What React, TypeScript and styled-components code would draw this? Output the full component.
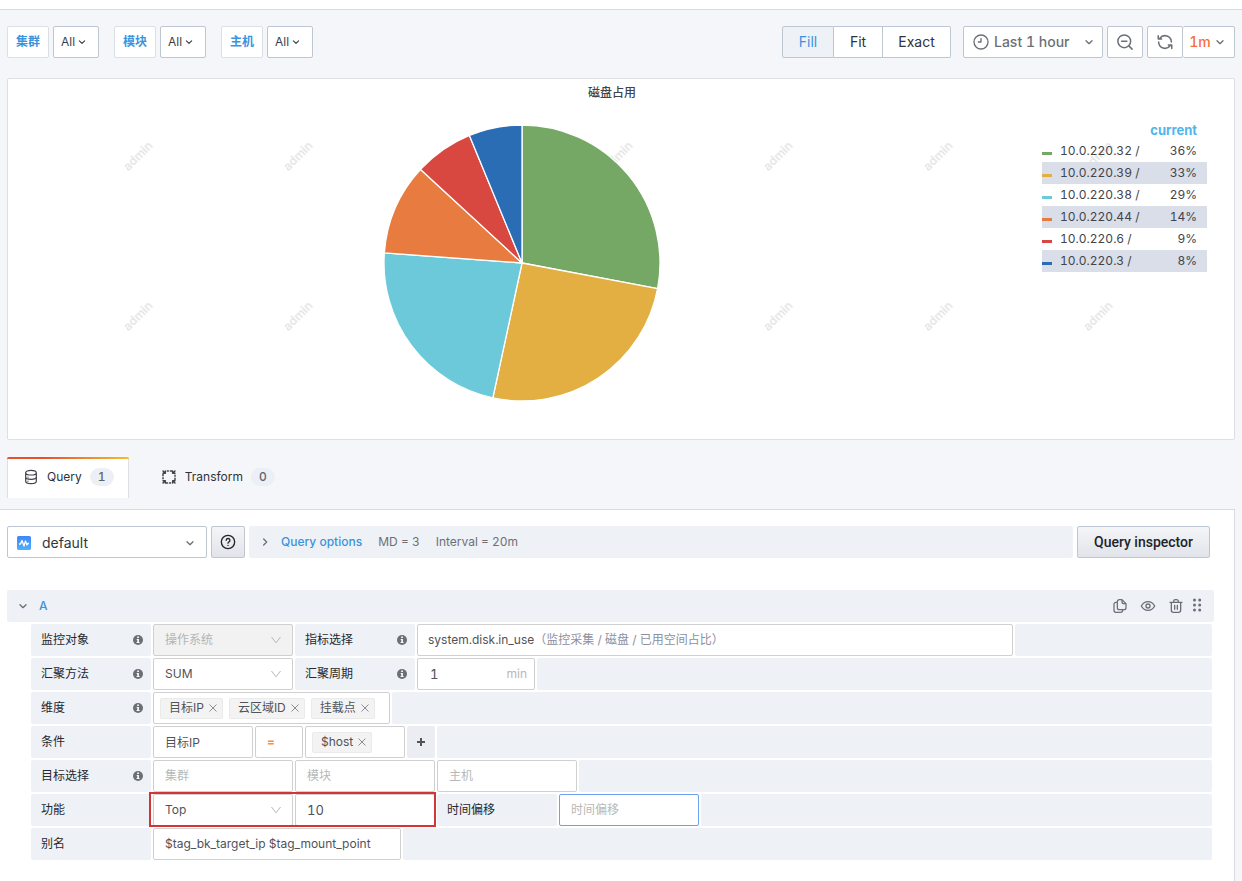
import React from "react";
import styled, { createGlobalStyle, css } from "styled-components";

const GlobalStyle = createGlobalStyle`
  *, *::before, *::after { box-sizing: border-box; }
  html, body, #root { height: 100%; }
  body {
    margin: 0;
    background: #f5f6f9;
    color: #41444b;
    font-family: Inter, "Noto Sans CJK SC", sans-serif;
    font-size: 12px;
    line-height: 16px;
    font-variant-numeric: tabular-nums;
  }
  button, input, select { font: inherit; color: inherit; margin: 0; }
  button { cursor: pointer; padding: 0; }
`;

const Page = styled.div`
  min-height: 100%;
  display: flex;
  flex-direction: column;
`;

const TopBar = styled.header`
  height: 10px;
  background: #fff;
  border-bottom: 1px solid #d8dce2;
`;

const Toolbar = styled.div`
  display: flex;
  justify-content: space-between;
  padding: 16px 7px 0;
  height: 68px;
`;

const Variables = styled.div`
  display: flex;
  gap: 15px;
`;

const Variable = styled.div`
  display: flex;
  gap: 4px;
`;

const VariableLabel = styled.label`
  height: 32px;
  width: 42px;
  display: flex;
  align-items: center;
  justify-content: center;
  background: #fff;
  border: 1px solid #dbe0e6;
  border-radius: 2px;
  color: #3a94dd;
  font-weight: 600;
`;

const Control = styled.button<{ $width: number }>`
  height: 32px;
  width: ${(p) => p.$width}px;
  display: flex;
  align-items: center;
  justify-content: center;
  background: #fff;
  border: 1px solid #bdc7d1;
  border-radius: 2px;
`;

const VariableValue = styled(Control)`
  gap: 0;
  padding-right: 2px;
  color: #3b3e45;
`;

const Actions = styled.div`
  display: flex;
  gap: 4px;
  font-size: 14px;
`;

const Segments = styled.div`
  display: flex;
  margin-right: 8px;
`;

const Segment = styled(Control)<{ $active?: boolean }>`
  color: #30343b;
  border-radius: 0;
  & + & { border-left: 0; }
  &:first-child { border-radius: 2px 0 0 2px; }
  &:last-child { border-radius: 0 2px 2px 0; }
  ${(p) => p.$active && css`background: #eef1f6; color: #3a94dd;`}
`;

const TimePicker = styled(Control)`
  justify-content: flex-start;
  padding: 0 5px 0 9px;
  gap: 5px;
  font-weight: 500;
  color: #6c7076;
  span { flex: 1; text-align: left; }
`;

const IconButton = styled(Control)`
  color: #6c7076;
`;

const RefreshGroup = styled.div`
  display: flex;
`;

const RefreshInterval = styled(Control)`
  border-left: 0;
  gap: 1px;
  color: #f96b3c;
  font-weight: 500;
  svg { color: #6c7076; }
`;

const Panel = styled.section`
  position: relative;
  height: 362px;
  margin: 0 7px;
  background: #fff;
  border: 1px solid #dbe0e6;
  border-radius: 2px;
`;

const PanelTitle = styled.h2`
  position: relative;
  margin: 0;
  padding-right: 18px;
  height: 28px;
  line-height: 28px;
  text-align: center;
  font-size: 12px;
  font-weight: 500;
`;

const PanelBody = styled.div`
  position: relative;
  display: flex;
  justify-content: space-between;
`;

const ChartArea = styled.div`
  flex: 1;
  display: flex;
  justify-content: center;
  padding: 17px 6px 0 0;
`;

const Watermark = styled.div`
  position: absolute;
  inset: 0;
  overflow: hidden;
  display: grid;
  grid-template-columns: repeat(7, 160px);
  grid-template-rows: 160px 160px;
  padding: 0 0 0 50px;
  color: #e6e6e6;
  font-size: 12px;
  font-weight: 600;
  span {
    display: flex;
    align-items: center;
    justify-content: center;
    transform: translateY(-3px) rotate(-45deg);
  }
`;

const Legend = styled.table`
  width: 165px;
  margin: 12px 27px 0 0;
  border-collapse: collapse;
  align-self: flex-start;
  th { height: 21px; padding: 0 10px 0 0; text-align: right; color: #52b5ec; font-size: 13px; font-weight: 700; }
  td { height: 22px; padding: 0; }
  td:last-child { text-align: right; padding-right: 10px; }
  tbody tr:nth-child(even) { background: #d9dee9; }
`;

const Series = styled.span<{ $color: string }>`
  display: flex;
  align-items: center;
  gap: 8px;
  &::before {
    content: "";
    width: 10px;
    height: 3px;
    margin-top: 5px;
    background: ${(p) => p.$color};
  }
`;

const Tabs = styled.nav`
  display: flex;
  gap: 16px;
  padding: 17px 7px 0;
  height: 69px;
`;

const Tab = styled.button<{ $active?: boolean }>`
  position: relative;
  height: 41px;
  display: flex;
  align-items: center;
  gap: 8px;
  padding: 0 16px 2px;
  border: 0;
  background: none;
  color: #2f333a;
  svg { color: #3f434a; }
  ${(p) => p.$active && css`
    background: #fff;
    border: solid #dbe0e6;
    border-width: 0 1px;
    border-radius: 2px 2px 0 0;
    padding: 0 14px 2px 15px;
    &::before {
      content: "";
      position: absolute;
      top: 0;
      left: -1px;
      right: -1px;
      height: 2px;
      border-radius: 2px 2px 0 0;
      background: linear-gradient(90deg, #e8502d 0%, #e8502d 30%, #f5bd2c 100%);
    }
  `}
`;

const Counter = styled.span`
  min-width: 24px;
  height: 18px;
  line-height: 18px;
  border-radius: 9px;
  background: #eceff5;
  color: #60646b;
  font-weight: 500;
`;

const Editor = styled.main`
  flex: 1;
  margin-right: 7px;
  padding: 16px 20px 20px 7px;
  background: #fff;
  border: 1px solid #d8dce2;
  border-width: 1px 1px 0 0;
`;

const SourceRow = styled.div`
  display: flex;
  gap: 4px;
  padding-right: 4px;
`;

const SourcePicker = styled(Control)`
  justify-content: flex-start;
  gap: 10px;
  padding: 2px 8px 0 8px;
  font-size: 14px;
  color: #33373e;
  span { flex: 1; text-align: left; }
  svg:last-child { color: #6c7076; }
`;

const RaisedButton = styled(Control)`
  background: linear-gradient(180deg, #f4f5f8 0%, #e1e4ea 100%);
  color: #212429;
  font-family: Roboto, sans-serif;
  font-size: 14px;
  font-weight: 500;
`;

const QueryOptions = styled.div`
  flex: 1;
  height: 32px;
  display: flex;
  align-items: center;
  gap: 16px;
  padding: 0 8px;
  background: #eef1f6;
  border-radius: 2px;
  color: #6c7076;
`;

const OptionsToggle = styled.button`
  display: flex;
  align-items: center;
  gap: 8px;
  border: 0;
  background: none;
  color: #3a94dd;
  font-weight: 500;
  svg { color: #6c7076; }
`;

const QueryHeader = styled.div`
  display: flex;
  align-items: center;
  gap: 8px;
  height: 32px;
  margin-top: 32px;
  padding: 0 12px 0 8px;
  background: #eef1f6;
  border-radius: 2px;
  color: #6c7076;
`;

const HeaderActions = styled.div`
  flex: 1;
  display: flex;
  justify-content: flex-end;
  gap: 12px;
`;

const PlainIcon = styled.button`
  display: flex;
  border: 0;
  background: none;
`;

const Rows = styled.div`
  display: flex;
  flex-direction: column;
  gap: 2px;
  margin: 2px 2px 0 24px;
`;

const Row = styled.div`
  position: relative;
  display: flex;
  gap: 2px;
  height: 32px;
`;

const Label = styled.label`
  flex: none;
  width: 120px;
  display: flex;
  align-items: center;
  justify-content: space-between;
  padding: 0 8px 0 10px;
  background: #eef1f6;
  border-radius: 2px;
  color: #26292f;
  svg { color: #6c7076; }
`;

const Filler = styled.div`
  flex: 1;
  background: #eef1f6;
  border-radius: 2px;
`;

const boxed = css`
  flex: none;
  height: 32px;
  background: #fff;
  border: 1px solid #d0d0d0;
  border-radius: 2px;
  color: #50535a;
`;

const SelectBox = styled.div<{ $disabled?: boolean }>`
  position: relative;
  flex: none;
  width: 140px;
  select {
    ${boxed}
    width: 100%;
    padding: 0 11px;
    appearance: none;
    opacity: 1;
    outline: none;
    ${(p) => p.$disabled && css`background: #f2f2f2; color: #b4b4b4;`}
  }
  svg {
    position: absolute;
    right: 11px;
    top: 10px;
    color: #b8b8b8;
    pointer-events: none;
  }
`;

const TextBox = styled.input<{ $width: number; $accent?: boolean; $large?: boolean }>`
  ${boxed}
  width: ${(p) => p.$width}px;
  padding: 0 11px 2px;
  outline: none;
  &::placeholder { color: #b8b8b8; opacity: 1; }
  ${(p) => p.$large && css`font-size: 13px; padding-bottom: 0;`}
  ${(p) => p.$accent && css`border-color: #6ba1f0;`}
`;

const OperatorBox = styled.button`
  ${boxed}
  width: 48px;
  text-align: left;
  padding: 0 11px;
  color: #ff9230;
  font-weight: 700;
`;

const ChipBox = styled.div<{ $width: number }>`
  ${boxed}
  width: ${(p) => p.$width}px;
  display: flex;
  align-items: center;
  gap: 6px;
  padding: 0 6px;
`;

const Chip = styled.span`
  height: 21px;
  display: flex;
  align-items: center;
  gap: 4px;
  padding: 0 4px 0 8px;
  background: #f3f3f3;
  border: 1px solid #eaeaea;
  border-radius: 2px;
  svg { color: #8a8d92; }
`;

const MetricButton = styled.button`
  ${boxed}
  flex: 0 1 596px;
  display: flex;
  align-items: center;
  padding: 0 10px;
  small { font-size: 12px; color: #8d8f9e; }
`;

const PeriodBox = styled.div`
  ${boxed}
  width: 118px;
  display: flex;
  align-items: center;
  padding: 0 7px 0 12px;
  input { flex: 1; min-width: 0; border: 0; padding: 0; outline: none; background: none; font-size: 13px; }
  span { color: #b8b8b8; }
`;

const AddButton = styled.button`
  width: 28px;
  display: flex;
  align-items: center;
  justify-content: center;
  border: 0;
  border-radius: 2px;
  background: #ebedf2;
  color: #505359;
`;

const Highlight = styled.div`
  position: absolute;
  left: 118px;
  top: -2px;
  width: 287px;
  height: 35px;
  border: 2px solid #d33535;
  pointer-events: none;
`;

type IconProps = { size?: number; children: React.ReactNode; stroke?: number };

function Icon({ size = 16, stroke = 2, children }: IconProps) {
  return (
    <svg width={size} height={size} viewBox="0 0 24 24" fill="none" stroke="currentColor" strokeWidth={stroke} strokeLinecap="round" strokeLinejoin="round" aria-hidden="true">
      {children}
    </svg>
  );
}

const AngleDown = ({ size = 16 }: { size?: number }) => <Icon size={size}><path d="M7.5 10l4.5 4.5 4.5-4.5" /></Icon>;
const AngleRight = () => <Icon><path d="M10 7.500l4.500 4.500-4.500 4.500" /></Icon>;

const Clock = () => (
  <Icon>
    <circle cx="12" cy="12" r="10.500" />
    <path d="M12 6.500v5.500H8" />
  </Icon>
);

const SearchMinus = () => (
  <Icon size={18}>
    <circle cx="11" cy="11" r="8.500" />
    <path d="M7.500 11h7M17.500 17.500l4 4" />
  </Icon>
);

const Sync = () => (
  <Icon size={18}>
    <path d="M20.500 12A8.500 8.500 0 0 0 5.200 7M3 3.500V8h4.500M3.500 12a8.500 8.500 0 0 0 15.300 5M21 20.500V16h-4.500" />
  </Icon>
);

const Database = () => (
  <Icon size={16} stroke={1.800}>
    <path d="M4 5.500C4 3.500 7.500 2 12 2s8 1.500 8 3.500v13c0 2-3.500 3.500-8 3.500s-8-1.500-8-3.500zM4 5.500C4 7.500 7.500 9 12 9s8-1.500 8-3.500M4 12C4 14 7.500 15.500 12 15.500s8-1.500 8-3.500M7.500 12.300v.1M7.500 18.300v.1" />
  </Icon>
);

const TransformIcon = () => (
  <Icon size={16} stroke={2.2}>
    <path d="M3 10V8M3 3l3.500 3.500M6.500 3v3.500H3M9.500 3H11M14 3h2M21 3l-3.500 3.500M17.500 3v3.500H21M21 9.500V11M21 14v2M21 21l-3.500-3.500M21 17.500h-3.500V21M14.500 21H13M10 21H8M3 21l3.500-3.500M6.500 21v-3.500H3M3 14.500V13" />
  </Icon>
);

const Question = () => (
  <Icon size={16}>
    <circle cx="12" cy="12" r="10" />
    <path d="M9.300 9.500a2.800 2.800 0 1 1 3.800 2.700c-.8.300-1.100.800-1.100 1.500M12 17v.1" />
  </Icon>
);

const Copy = () => (
  <Icon size={16} stroke={1.900}>
    <path d="M15 2.500h-4a3 3 0 0 0-3 3v9a3 3 0 0 0 3 3h7a3 3 0 0 0 3-3v-6zM15 2.500v3a3 3 0 0 0 3 3h3M8 6.500H6a3 3 0 0 0-3 3v9a3 3 0 0 0 3 3h7a3 3 0 0 0 3-3v-1" />
  </Icon>
);

const Eye = () => (
  <Icon size={16}>
    <path d="M2 12c2.300-4.300 5.800-6.500 10-6.500s7.700 2.200 10 6.500c-2.300 4.300-5.800 6.500-10 6.500S4.300 16.300 2 12z" />
    <circle cx="12" cy="12" r="3" />
  </Icon>
);

const Trash = () => (
  <Icon size={16}>
    <path d="M3 6.500h18M5 6.500v12a3 3 0 0 0 3 3h8a3 3 0 0 0 3-3v-12M8.500 6.500V5a2.500 2.500 0 0 1 2.500-2.500h2A2.500 2.500 0 0 1 15.500 5v1.500M10 11v6M14 11v6" />
  </Icon>
);

const Drag = () => (
  <svg width="10" height="16" viewBox="0 0 10 16" fill="currentColor" aria-hidden="true">
    {[2, 7, 12].map((y) => (
      <React.Fragment key={y}>
        <circle cx="2.500" cy={y} r="1.500" />
        <circle cx="7.700" cy={y} r="1.500" />
      </React.Fragment>
    ))}
  </svg>
);

const Info = () => (
  <svg width="10" height="10" viewBox="0 0 10 10" aria-hidden="true">
    <circle cx="5" cy="5" r="5" fill="currentColor" />
    <path d="M4.200 1.500h1.700v1.400H4.200zM3.700 3.900h2.200v3.200h.7v1H3.600v-1h.7V4.900h-.6z" fill="#fff" />
  </svg>
);

const Chevron = () => (
  <svg width="12" height="12" viewBox="0 0 12 12" fill="none" stroke="currentColor" aria-hidden="true">
    <path d="M1.500 3L6 8.800 10.500 3" />
  </svg>
);

const Cross = () => (
  <svg width="10" height="10" viewBox="0 0 10 10" fill="none" stroke="currentColor" aria-hidden="true">
    <path d="M1.500 1.500l7 7M8.500 1.500l-7 7" />
  </svg>
);

const Plus = () => (
  <svg width="10" height="10" viewBox="0 0 10 10" fill="none" stroke="currentColor" strokeWidth="2" aria-hidden="true">
    <path d="M1 5h8M5 1v8" />
  </svg>
);

const SourceLogo = () => (
  <svg width="16" height="16" viewBox="0 0 16 16" aria-hidden="true">
    <defs>
      <linearGradient id="logo" x1="0" y1="0" x2="0" y2="1">
        <stop offset="0" stopColor="#3f86f6" />
        <stop offset="1" stopColor="#4fb0fb" />
      </linearGradient>
    </defs>
    <rect x="1" y="1" width="14" height="14" rx="1.500" fill="url(#logo)" />
    <path d="M3 9h1.500L6 5.500 8 11l1.500-5L11 10l.8-1.500H13" fill="none" stroke="#fff" strokeWidth="1.300" strokeLinejoin="round" />
  </svg>
);

const SERIES = [
  { name: "10.0.220.32 /", value: "36%", color: "#75a865", to: 100.700 },
  { name: "10.0.220.39 /", value: "33%", color: "#e3af42", to: 192.200 },
  { name: "10.0.220.38 /", value: "29%", color: "#6bc9da", to: 274.200 },
  { name: "10.0.220.44 /", value: "14%", color: "#e87b40", to: 312.700 },
  { name: "10.0.220.6 /", value: "9%", color: "#d94840", to: 337.600 },
  { name: "10.0.220.3 /", value: "8%", color: "#2a6db5", to: 360 },
];

function Pie() {
  const c = 139;
  const r = 138;
  const at = (deg: number) => {
    const a = ((deg - 90) * Math.PI) / 180;
    return `${c + r * Math.cos(a)} ${c + r * Math.sin(a)}`;
  };
  return (
    <svg width="278" height="278" viewBox="0 0 278 278" role="img" aria-label="磁盘占用">
      {SERIES.map((s, i) => (
        <path
          key={s.name}
          d={`M${c} ${c}L${at(i ? SERIES[i - 1].to : 0)}A${r} ${r} 0 0 1 ${at(s.to)}Z`}
          fill={s.color}
          stroke="#fff"
          strokeWidth="1.300"
          strokeLinejoin="round"
        />
      ))}
    </svg>
  );
}

function Toggle({ id, name }: { id: string; name: string }) {
  return (
    <Variable>
      <VariableLabel htmlFor={id}>{name}</VariableLabel>
      <VariableValue id={id} $width={46}>All<AngleDown size={14} /></VariableValue>
    </Variable>
  );
}

function FieldLabel({ htmlFor, info, children }: { htmlFor: string; info?: boolean; children: string }) {
  return <Label htmlFor={htmlFor}>{children}{info && <Info />}</Label>;
}

function Dropdown({ id, value, disabled }: { id: string; value: string; disabled?: boolean }) {
  return (
    <SelectBox $disabled={disabled}>
      <select id={id} disabled={disabled} defaultValue={value}><option>{value}</option></select>
      <Chevron />
    </SelectBox>
  );
}

function Chips({ id, items, width }: { id: string; items: string[]; width: number }) {
  return (
    <ChipBox id={id} $width={width}>
      {items.map((item) => (
        <Chip key={item}>{item}<PlainIcon aria-label={`移除 ${item}`}><Cross /></PlainIcon></Chip>
      ))}
    </ChipBox>
  );
}

export default function App() {
  return (
    <Page>
      <GlobalStyle />
      <TopBar />
      <Toolbar>
        <Variables>
          <Toggle id="cluster" name="集群" />
          <Toggle id="module" name="模块" />
          <Toggle id="host" name="主机" />
        </Variables>
        <Actions>
          <Segments>
            <Segment $width={52} $active>Fill</Segment>
            <Segment $width={49}>Fit</Segment>
            <Segment $width={68}>Exact</Segment>
          </Segments>
          <TimePicker $width={140}><Clock /><span>Last 1 hour</span><AngleDown /></TimePicker>
          <IconButton $width={36} aria-label="Zoom out"><SearchMinus /></IconButton>
          <RefreshGroup>
            <IconButton $width={36} aria-label="Refresh"><Sync /></IconButton>
            <RefreshInterval $width={52}>1m<AngleDown /></RefreshInterval>
          </RefreshGroup>
        </Actions>
      </Toolbar>

      <Panel>
        <Watermark aria-hidden="true">
          {Array.from({ length: 14 }, (_, i) => <span key={i}>admin</span>)}
        </Watermark>
        <PanelTitle>磁盘占用</PanelTitle>
        <PanelBody>
          <ChartArea><Pie /></ChartArea>
          <Legend>
            <thead><tr><th colSpan={2}>current</th></tr></thead>
            <tbody>
              {SERIES.map((s) => (
                <tr key={s.name}>
                  <td><Series $color={s.color}>{s.name}</Series></td>
                  <td>{s.value}</td>
                </tr>
              ))}
            </tbody>
          </Legend>
        </PanelBody>
      </Panel>

      <Tabs>
        <Tab $active><Database />Query<Counter>1</Counter></Tab>
        <Tab><TransformIcon />Transform<Counter>0</Counter></Tab>
      </Tabs>

      <Editor>
        <SourceRow>
          <SourcePicker $width={200}><SourceLogo /><span>default</span><AngleDown /></SourcePicker>
          <RaisedButton $width={34} aria-label="Help"><Question /></RaisedButton>
          <QueryOptions>
            <OptionsToggle><AngleRight />Query options</OptionsToggle>
            <span>MD = 3</span>
            <span>Interval = 20m</span>
          </QueryOptions>
          <RaisedButton $width={133}>Query inspector</RaisedButton>
        </SourceRow>

        <QueryHeader>
          <OptionsToggle><AngleDown />A</OptionsToggle>
          <HeaderActions>
            <PlainIcon aria-label="Duplicate"><Copy /></PlainIcon>
            <PlainIcon aria-label="Toggle"><Eye /></PlainIcon>
            <PlainIcon aria-label="Remove"><Trash /></PlainIcon>
          </HeaderActions>
          <PlainIcon aria-label="Drag"><Drag /></PlainIcon>
        </QueryHeader>

        <Rows>
          <Row>
            <FieldLabel htmlFor="target" info>监控对象</FieldLabel>
            <Dropdown id="target" value="操作系统" disabled />
            <FieldLabel htmlFor="metric" info>指标选择</FieldLabel>
            <MetricButton id="metric">system.disk.in_use<small>（监控采集 / 磁盘 / 已用空间占比）</small></MetricButton>
            <Filler />
          </Row>
          <Row>
            <FieldLabel htmlFor="method" info>汇聚方法</FieldLabel>
            <Dropdown id="method" value="SUM" />
            <FieldLabel htmlFor="period" info>汇聚周期</FieldLabel>
            <PeriodBox><input id="period" defaultValue="1" /><span>min</span></PeriodBox>
            <Filler />
          </Row>
          <Row>
            <FieldLabel htmlFor="dimension" info>维度</FieldLabel>
            <Chips id="dimension" width={237} items={["目标IP", "云区域ID", "挂载点"]} />
            <Filler />
          </Row>
          <Row>
            <FieldLabel htmlFor="condition">条件</FieldLabel>
            <TextBox id="condition" $width={100} defaultValue="目标IP" />
            <OperatorBox>=</OperatorBox>
            <Chips id="condition-value" width={100} items={["$host"]} />
            <AddButton aria-label="添加条件"><Plus /></AddButton>
            <Filler />
          </Row>
          <Row>
            <FieldLabel htmlFor="pick-cluster" info>目标选择</FieldLabel>
            <TextBox id="pick-cluster" $width={140} placeholder="集群" />
            <TextBox aria-label="模块" $width={140} placeholder="模块" />
            <TextBox aria-label="主机" $width={140} placeholder="主机" />
            <Filler />
          </Row>
          <Row>
            <FieldLabel htmlFor="func">功能</FieldLabel>
            <Dropdown id="func" value="Top" />
            <TextBox aria-label="Top" $width={140} $large defaultValue="10" />
            <FieldLabel htmlFor="offset">时间偏移</FieldLabel>
            <TextBox id="offset" $width={140} $accent placeholder="时间偏移" />
            <Filler />
            <Highlight />
          </Row>
          <Row>
            <FieldLabel htmlFor="alias">别名</FieldLabel>
            <TextBox id="alias" $width={248} defaultValue="$tag_bk_target_ip $tag_mount_point" />
            <Filler />
          </Row>
        </Rows>
      </Editor>
    </Page>
  );
}
